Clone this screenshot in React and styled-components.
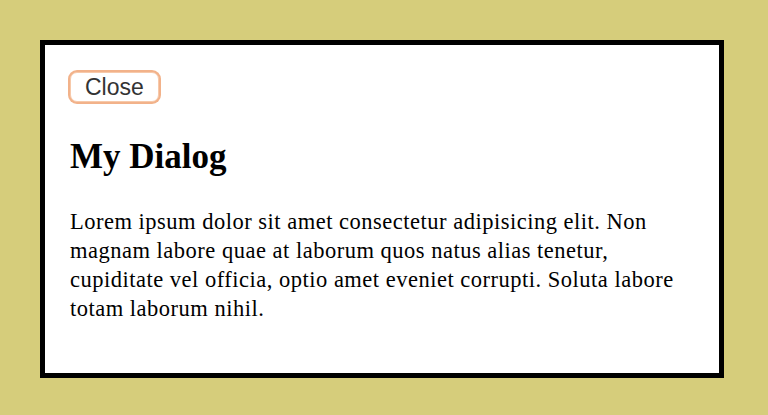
import React from "react";
import styled, { createGlobalStyle } from "styled-components";

const Global = createGlobalStyle`
  html, body { margin: 0; padding: 0; }
  body {
    background: #d6cd7b;
    width: 768px;
    height: 415px;
    overflow: hidden;
  }
`;

const Page = styled.div`
  padding: 40px 44px 37px 40px;
  box-sizing: border-box;
  height: 415px;
`;

const Dialog = styled.div`
  box-sizing: border-box;
  height: 338px;
  background: #ffffff;
  border: 5px solid #000000;
  padding: 27px 25px 0 25px;
  display: flex;
  flex-direction: column;
  align-items: flex-start;
`;

const CloseButton = styled.button`
  box-sizing: border-box;
  height: 30px;
  padding: 0 14px;
  background: #ffffff;
  border: 1px solid #f7c9aa;
  border-radius: 7px;
  box-shadow: 0 0 0 2px #f2b28a;
  font-family: "Liberation Sans", Arial, sans-serif;
  font-size: 23px;
  line-height: 26px;
  color: #333333;
  cursor: pointer;
`;

const Title = styled.h2`
  margin: 35px 0 0 0;
  font-family: "Liberation Serif", "Times New Roman", serif;
  font-weight: bold;
  font-size: 35px;
  line-height: 40px;
  color: #000;
`;

const Body = styled.p`
  margin: 30px 0 0 0;
  font-family: "Liberation Serif", "Times New Roman", serif;
  font-size: 22.5px;
  letter-spacing: 0.5px;
  line-height: 29px;
  color: #000;
`;

export default function App() {
  return (
    <>
      <Global />
      <Page>
        <Dialog>
          <CloseButton>Close</CloseButton>
          <Title>My Dialog</Title>
          <Body>
            Lorem ipsum dolor sit amet consectetur adipisicing elit. Non magnam
            labore quae at laborum quos natus alias tenetur, cupiditate vel
            officia, optio amet eveniet corrupti. Soluta labore totam laborum
            nihil.
          </Body>
        </Dialog>
      </Page>
    </>
  );
}
